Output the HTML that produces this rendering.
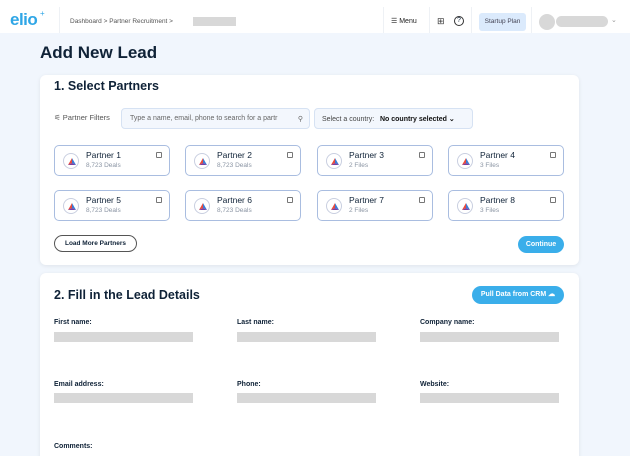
<!DOCTYPE html>
<html><head><meta charset="utf-8"><style>
*{box-sizing:border-box;margin:0;padding:0}
html,body{width:630px;height:456px;overflow:hidden}
body{background:#f1f6fd;font-family:"Liberation Sans",sans-serif;color:#0f2237;position:relative}
.abs{position:absolute}
.hdr{left:0;top:0;width:630px;height:33px;background:#fff}
.vl{position:absolute;top:7px;width:1px;height:26px;background:#eef1f5}
.card{position:absolute;left:40px;width:539px;background:#fff;border-radius:6px;box-shadow:0 1px 4px rgba(0,0,0,.08)}
.h2{position:absolute;font-weight:bold;font-size:12.5px;color:#0f2237}
.pc{position:absolute;width:116px;height:31px;border:1px solid #a9bde0;border-radius:5px;background:#fff}
.pc .lg{position:absolute;left:8px;top:7px;width:16px;height:16px;border:1px solid #c9cfe0;border-radius:50%}
.pc .lg svg{position:absolute;left:3px;top:3px}
.pc .nm{position:absolute;left:31px;top:4px;font-size:8.5px;color:#0f2237;font-weight:500}
.pc .sb{position:absolute;left:31px;top:16px;font-size:6.5px;color:#8a94a3}
.pc .cb{position:absolute;right:7px;top:6px;width:6px;height:6px;border:1px solid #777;border-radius:1px}
.lab{position:absolute;font-size:7px;font-weight:bold;color:#0f2237}
.inp{position:absolute;width:139px;height:10px;background:#d8d8d8}
.btn{position:absolute;background:#3aaeea;color:#fff;font-size:7px;font-weight:bold;border-radius:9px;text-align:center}
</style></head><body>
<div class="abs hdr"></div>
<div class="abs" style="left:10px;top:10px;font-size:17px;font-weight:bold;color:#2fa6e6;letter-spacing:-.5px">elio</div>
<div class="abs" style="left:40px;top:9px;font-size:8px;color:#2fa6e6">+</div>
<div class="vl" style="left:59px"></div>
<div class="abs" style="left:70px;top:18px;font-size:6.5px;color:#555">Dashboard &gt; Partner Recruitment &gt;</div>
<div class="abs" style="left:193px;top:17px;width:43px;height:9px;background:#d8d8d8"></div>
<div class="vl" style="left:383px"></div>
<div class="abs" style="left:391px;top:17px;font-size:7px;color:#222">☰ Menu</div>
<div class="vl" style="left:429px"></div>
<div class="abs" style="left:437px;top:16px;font-size:9px;color:#333">⊞</div>
<div class="abs" style="left:454px;top:16px;width:10px;height:10px;border:1px solid #333;border-radius:50%;font-size:7px;text-align:center;line-height:8px">?</div>
<div class="vl" style="left:471px"></div>
<div class="abs" style="left:479px;top:13px;width:47px;height:18px;background:#dbeafc;border-radius:3px;font-size:6.5px;color:#445;text-align:center;line-height:18px">Startup Plan</div>
<div class="vl" style="left:531px"></div>
<div class="abs" style="left:539px;top:14px;width:16px;height:16px;border-radius:50%;background:#d8d8d8"></div>
<div class="abs" style="left:556px;top:16px;width:52px;height:11px;border-radius:6px;background:#d8d8d8"></div>
<div class="abs" style="left:611px;top:16px;font-size:7px;color:#999">⌄</div>

<div class="abs" style="left:40px;top:43px;font-size:17px;font-weight:bold;color:#0f2237">Add New Lead</div>

<div class="card" style="top:75px;height:190px"></div>
<div class="h2" style="left:54px;top:79px">1. Select Partners</div>
<div class="abs" style="left:54px;top:113px;font-size:7.5px;color:#555">⚟ Partner Filters</div>
<div class="abs" style="left:121px;top:108px;width:189px;height:21px;border:1px solid #d6e2f3;border-radius:4px;background:#f3f7fd;font-size:7px;color:#666;padding:6px 0 0 8px;white-space:nowrap;overflow:hidden">Type a name, email, phone to search for a partr <span style="position:absolute;right:6px">⚲</span></div>
<div class="abs" style="left:314px;top:108px;width:159px;height:21px;border:1px solid #d6e2f3;border-radius:4px;background:#f3f7fd;font-size:7px;color:#444;padding:6px 0 0 7px;white-space:nowrap">Select a country: &nbsp;&nbsp;<b style="color:#111">No country selected ⌄</b></div>

<svg width="0" height="0" style="position:absolute"><defs><g id="tri"><path d="M5 1 L1 8 L5 6 Z" fill="#e94b3c"/><path d="M5 1 L9 8 L5 6 Z" fill="#3a7bd5"/><path d="M1 8 L9 8 L5 6 Z" fill="#7b3fa0"/></g></defs></svg>

<div class="pc" style="left:54px;top:145px"><div class="lg"><svg width="10" height="10"><use href="#tri"/></svg></div><div class="nm">Partner 1</div><div class="sb">8,723 Deals</div><div class="cb"></div></div>
<div class="pc" style="left:185px;top:145px"><div class="lg"><svg width="10" height="10"><use href="#tri"/></svg></div><div class="nm">Partner 2</div><div class="sb">8,723 Deals</div><div class="cb"></div></div>
<div class="pc" style="left:317px;top:145px"><div class="lg"><svg width="10" height="10"><use href="#tri"/></svg></div><div class="nm">Partner 3</div><div class="sb">2 Files</div><div class="cb"></div></div>
<div class="pc" style="left:448px;top:145px"><div class="lg"><svg width="10" height="10"><use href="#tri"/></svg></div><div class="nm">Partner 4</div><div class="sb">3 Files</div><div class="cb"></div></div>
<div class="pc" style="left:54px;top:190px"><div class="lg"><svg width="10" height="10"><use href="#tri"/></svg></div><div class="nm">Partner 5</div><div class="sb">8,723 Deals</div><div class="cb"></div></div>
<div class="pc" style="left:185px;top:190px"><div class="lg"><svg width="10" height="10"><use href="#tri"/></svg></div><div class="nm">Partner 6</div><div class="sb">8,723 Deals</div><div class="cb"></div></div>
<div class="pc" style="left:317px;top:190px"><div class="lg"><svg width="10" height="10"><use href="#tri"/></svg></div><div class="nm">Partner 7</div><div class="sb">2 Files</div><div class="cb"></div></div>
<div class="pc" style="left:448px;top:190px"><div class="lg"><svg width="10" height="10"><use href="#tri"/></svg></div><div class="nm">Partner 8</div><div class="sb">3 Files</div><div class="cb"></div></div>

<div class="abs" style="left:54px;top:235px;width:83px;height:17px;border:1px solid #555;border-radius:9px;font-size:6.5px;font-weight:bold;text-align:center;line-height:15px">Load More Partners</div>
<div class="btn" style="left:518px;top:236px;width:46px;height:17px;line-height:17px">Continue</div>

<div class="card" style="top:273px;height:200px"></div>
<div class="h2" style="left:54px;top:288px">2. Fill in the Lead Details</div>
<div class="btn" style="left:472px;top:286px;width:92px;height:18px;line-height:18px">Pull Data from CRM ☁</div>

<div class="lab" style="left:54px;top:319px">First name:</div><div class="inp" style="left:54px;top:332px"></div>
<div class="lab" style="left:237px;top:319px">Last name:</div><div class="inp" style="left:237px;top:332px"></div>
<div class="lab" style="left:420px;top:319px">Company name:</div><div class="inp" style="left:420px;top:332px"></div>
<div class="lab" style="left:54px;top:381px">Email address:</div><div class="inp" style="left:54px;top:393px"></div>
<div class="lab" style="left:237px;top:381px">Phone:</div><div class="inp" style="left:237px;top:393px"></div>
<div class="lab" style="left:420px;top:381px">Website:</div><div class="inp" style="left:420px;top:393px"></div>
<div class="lab" style="left:54px;top:443px">Comments:</div>
</body></html>
